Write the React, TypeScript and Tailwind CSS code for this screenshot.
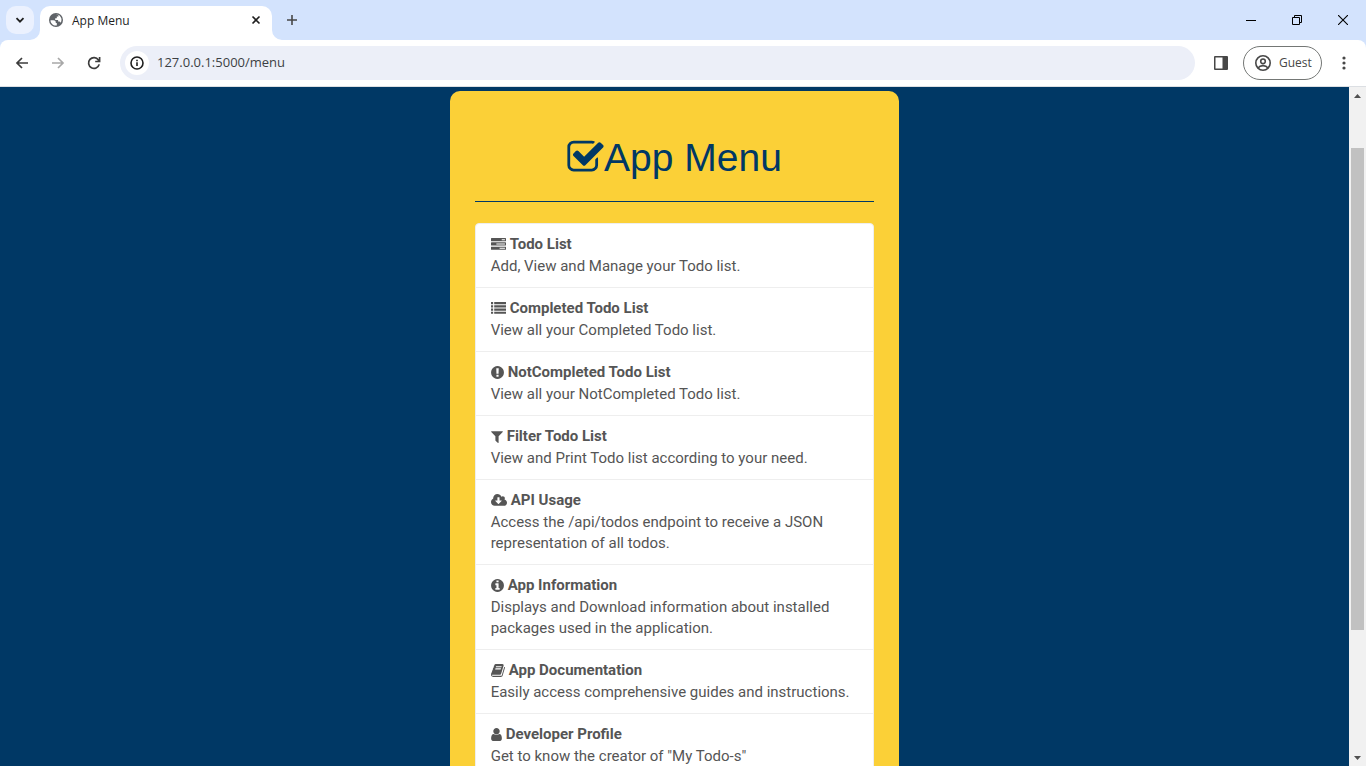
import type { ReactNode } from "react";

type IconProps = { d: string; width?: number; className: string };

function Glyph({ d, width = 1792, className }: IconProps) {
  const offset = width > 1792 ? 0 : (1792 - width) / 2;
  return (
    <svg viewBox={`${offset} 0 ${width} 1792`} className={className} fill="currentColor" aria-hidden="true">
      <path d={d} />
    </svg>
  );
}

const CHECK =
  "M1472 930v318q0 119-84.5 203.5t-203.5 84.5h-832q-119 0-203.5-84.5t-84.5-203.5v-832q0-119 84.5-203.5t203.5-84.5h832q63 0 117 25 15 7 18 23 3 17-9 29l-49 49q-10 10-23 10-3 0-9-2-23-6-45-6h-832q-66 0-113 47t-47 113v832q0 66 47 113t113 47h832q66 0 113-47t47-113v-254q0-13 9-22l64-64q10-10 23-10 6 0 12 3 20 8 20 29zm231-489l-814 814q-24 24-57 24t-57-24l-430-430q-24-24-24-57t24-57l110-110q24-24 57-24t57 24l263 263 647-647q24-24 57-24t57 24l110 110q24 24 24 57t-24 57z";
const TASKS =
  "M1024 1408h640v-128h-640v128zm-384-512h1024v-128h-1024v128zm640-512h384v-128h-384v128zm512 832v256q0 26-19 45t-45 19h-1664q-26 0-45-19t-19-45v-256q0-26 19-45t45-19h1664q26 0 45 19t19 45zm0-512v256q0 26-19 45t-45 19h-1664q-26 0-45-19t-19-45v-256q0-26 19-45t45-19h1664q26 0 45 19t19 45zm0-512v256q0 26-19 45t-45 19h-1664q-26 0-45-19t-19-45v-256q0-26 19-45t45-19h1664q26 0 45 19t19 45z";
const LIST =
  "M0 1280h256v256h-256zM0 896h256v256h-256zM0 512h256v256h-256zM0 128h256v256h-256zM384 1280h1408v256h-1408zM384 896h1408v256h-1408zM384 512h1408v256h-1408zM384 128h1408v256h-1408z";
const EXCLAMATION =
  "M896 128q209 0 385.5 103t279.5 279.5 103 385.5-103 385.5-279.5 279.5-385.5 103-385.5-103-279.5-279.5-103-385.5 103-385.5 279.5-279.5 385.5-103zm128 1247v-190q0-14-9-23.5t-22-9.5h-192q-13 0-23 10t-10 23v190q0 13 10 23t23 10h192q13 0 22-9.5t9-23.5zm-2-344l18-621q0-12-10-18-10-8-24-8h-220q-14 0-24 8-10 6-10 18l17 621q0 10 10 17.5t24 7.5h185q14 0 23.5-7.5t10.5-17.5z";
const FILTER =
  "M1595 295q17 41-14 70l-493 493v742q0 42-39 59-13 5-25 5-27 0-45-19l-256-256q-19-19-19-45v-486l-493-493q-31-29-14-70 17-39 59-39h1280q42 0 59 39z";
const CLOUD =
  "M1280 928q0-14-9-23t-23-9h-224v-352q0-13-9.500-22.500t-22.500-9.500h-192q-13 0-22.500 9.500t-9.500 22.500v352h-224q-13 0-22.500 9.500t-9.500 22.500q0 14 9 23l352 352q9 9 23 9t23-9l351-351q10-12 10-24zm640 224q0 159-112.500 271.500t-271.500 112.500h-1088q-185 0-316.500-131.500t-131.500-316.500q0-130 70-240t188-165q-2-30-2-43 0-212 150-362t362-150q156 0 285.500 87t188.500 231q71-62 166-62 106 0 181 75t75 181q0 76-41 138 130 31 213.500 135.500t83.500 238.500z";
const INFO =
  "M1152 1376v-160q0-14-9-23t-23-9h-96v-512q0-14-9-23t-23-9h-320q-14 0-23 9t-9 23v160q0 14 9 23t23 9h96v320h-96q-14 0-23 9t-9 23v160q0 14 9 23t23 9h448q14 0 23-9t9-23zm-128-896v-160q0-14-9-23t-23-9h-192q-14 0-23 9t-9 23v160q0 14 9 23t23 9h192q14 0 23-9t9-23zm640 416q0 209-103 385.5t-279.5 279.5-385.5 103-385.5-103-279.5-279.5-103-385.5 103-385.5 279.5-279.5 385.5-103 385.5 103 279.5 279.5 103 385.5z";
const BOOK =
  "M1703 478q40 57 18 129l-275 906q-19 64-76.500 107.500t-122.500 43.500h-923q-77 0-148.500-53.500t-99.500-131.500q-24-67-2-127 0-4 3-27t4-37q1-8-3-21.500t-3-19.500q2-11 8-21t16.500-23.500 16.500-23.500q23-38 45-91.500t30-91.500q3-10 .5-30t-.5-28q3-11 17-28t17-23q21-36 42-92t25-90q1-9-2.500-32t.5-28q4-13 22-30.500t22-22.500q19-26 42.500-84.500t27.500-96.500q1-8-3-25.500t-2-26.500q2-8 9-18t18-23 17-21q8-12 16.500-30.500t15-35 16-36 19.500-32 26.500-23.500 36-11.500 47.500 5.500l-1 3q38-9 51-9h761q74 0 114 56t18 130l-274 906q-36 119-71.500 153.500t-128.500 34.500h-869q-27 0-38 15-11 16-1 43 24 70 144 70h923q29 0 56-15.500t35-41.500l300-987q7-22 5-57 38 15 59 43zm-1064 2q-4 13 2 22.500t20 9.500h608q13 0 25.500-9.500t16.500-22.500l21-64q4-13-2-22.500t-20-9.500h-608q-13 0-25.500 9.500t-16.500 22.500zm-83 256q-4 13 2 22.500t20 9.500h608q13 0 25.500-9.500t16.500-22.500l21-64q4-13-2-22.500t-20-9.500h-608q-13 0-25.500 9.500t-16.500 22.500z";
const USER =
  "M1536 1399q0 109-62.500 187t-150.500 78h-854q-88 0-150.500-78t-62.500-187q0-85 8.500-160.500t31.500-152 58.500-131 94-89 134.500-34.500q131 128 313 128t313-128q76 0 134.500 34.500t94 89 58.500 131 31.500 152 8.500 160.500zm-256-887q0 159-112.500 271.500t-271.500 112.500-271.500-112.500-112.500-271.500 112.500-271.500 271.500-112.500 271.500 112.500 112.500 271.500z";

const items = [
  { title: "Todo List", text: "Add, View and Manage your Todo list.", d: TASKS, width: 1792, size: "w-[15px]" },
  { title: "Completed Todo List", text: "View all your Completed Todo list.", d: LIST, width: 1792, size: "w-[15px]" },
  { title: "NotCompleted Todo List", text: "View all your NotCompleted Todo list.", d: EXCLAMATION, width: 1536, size: "w-[13px]" },
  { title: "Filter Todo List", text: "View and Print Todo list according to your need.", d: FILTER, width: 1408, size: "w-[12px]" },
  { title: "API Usage", text: "Access the /api/todos endpoint to receive a JSON representation of all todos.", d: CLOUD, width: 1920, size: "w-[16px]" },
  { title: "App Information", text: "Displays and Download information about installed packages used in the application.", d: INFO, width: 1536, size: "w-[13px]" },
  { title: "App Documentation", text: "Easily access comprehensive guides and instructions.", d: BOOK, width: 1664, size: "w-[14px]" },
  { title: "Developer Profile", text: 'Get to know the creator of "My Todo-s"', d: USER, width: 1280, size: "w-[11px]" },
];

function IconButton({ label, className = "", children }: { label: string; className?: string; children: ReactNode }) {
  return (
    <button type="button" aria-label={label} className={`flex shrink-0 items-center justify-center ${className}`}>
      {children}
    </button>
  );
}

function TabStrip() {
  return (
    <div className="flex h-10 shrink-0 items-start bg-[#d3e3fd]">
      <IconButton label="Search tabs" className="mt-[6px] ml-[6px] size-7 rounded-[10px] bg-[#ebf1fe]">
        <svg width="10" height="10" viewBox="0 0 10 10" fill="none" stroke="#1f1f1f" strokeWidth="1.8" aria-hidden="true">
          <path d="M1.500 3.200 5 6.700 8.500 3.200" />
        </svg>
      </IconButton>
      <div className="relative mt-[6px] ml-[6px] flex h-[34px] w-[232px] items-center rounded-t-[10px] bg-white pr-[10px] pb-[6px] pl-2">
        <svg width="10" height="10" viewBox="0 0 10 10" fill="#fff" className="absolute bottom-0 -left-[10px]" aria-hidden="true">
          <path d="M10 0v10H0A10 10 0 0 0 10 0Z" />
        </svg>
        <svg width="10" height="10" viewBox="0 0 10 10" fill="#fff" className="absolute -right-[10px] bottom-0" aria-hidden="true">
          <path d="M0 0v10H10A10 10 0 0 1 0 0Z" />
        </svg>
        <svg width="16" height="16" viewBox="0 0 16 16" aria-hidden="true">
          <circle cx="8" cy="8" r="7" fill="#5f6368" />
          <path
            d="M2.500 8.300h2.800c1.600 0 2.500.8 2.500 2.200v.6h1v2.400c-3.200.6-6.200-1.700-6.300-5.200ZM8.200 2.500c2.700 0 4.500 1.600 5.200 4.100.3 1.800-.1 3.300-.8 4.200-.3-.7-.7-1.300-1.600-1.300h-.9V7.900H7.200V6.200h1.600V4.600h1.700V3.400c-1-.6-1.700-.7-2.300-.9Z"
            fill="#fff"
          />
        </svg>
        <span className="ml-2 flex-1 pt-[2px] text-xs text-[#1f1f1f]">App Menu</span>
        <IconButton label="Close tab" className="size-3">
          <svg width="10" height="10" viewBox="0 0 10 10" stroke="#1f1f1f" strokeWidth="1.600" aria-hidden="true">
            <path d="m1.500 1.500 7 7m0-7-7 7" />
          </svg>
        </IconButton>
      </div>
      <IconButton label="New tab" className="mt-[6px] ml-[6px] size-7">
        <svg width="12" height="12" viewBox="0 0 12 12" stroke="#474747" strokeWidth="1.600" aria-hidden="true">
          <path d="M6 1v10M1 6h10" />
        </svg>
      </IconButton>
      <div className="ml-auto flex h-10">
        <IconButton label="Minimize" className="w-[46px]">
          <svg width="10" height="10" viewBox="0 0 10 10" stroke="#000" aria-hidden="true">
            <path d="M0 5.500h10" />
          </svg>
        </IconButton>
        <IconButton label="Restore" className="w-[46px]">
          <svg width="10" height="10" viewBox="0 0 10 10" fill="none" stroke="#000" aria-hidden="true">
            <path d="M.5 2.500h7v7h-7zM2.500 2.500v-2h7v7h-2" />
          </svg>
        </IconButton>
        <IconButton label="Close" className="w-[46px]">
          <svg width="10" height="10" viewBox="0 0 10 10" stroke="#000" strokeWidth="1.100" aria-hidden="true">
            <path d="m0 0 10 10M10 0 0 10" />
          </svg>
        </IconButton>
      </div>
    </div>
  );
}

function Toolbar() {
  return (
    <div className="shrink-0 bg-[#d3e3fd]">
      <div className="flex h-[47px] items-center rounded-t-[8px] border-b border-[#dcdfe3] bg-white pr-[6px] pl-1">
        <IconButton label="Back" className="size-9">
          <svg width="14" height="14" viewBox="0 0 14 14" fill="none" stroke="#3c3c3c" strokeWidth="1.700" aria-hidden="true">
            <path d="M13 7H2.500M7 2 2 7l5 5" />
          </svg>
        </IconButton>
        <IconButton label="Forward" className="size-9">
          <svg width="14" height="14" viewBox="0 0 14 14" fill="none" stroke="#a8a8a8" strokeWidth="1.700" aria-hidden="true">
            <path d="M1 7h10.500M7 2l5 5-5 5" />
          </svg>
        </IconButton>
        <IconButton label="Reload" className="size-9">
          <svg width="14" height="14" viewBox="0 0 14 14" fill="none" stroke="#3c3c3c" strokeWidth="1.700" aria-hidden="true">
            <path d="M12.200 8.400A5.400 5.400 0 1 1 11.400 3.900L12.600 5.200M12.600 1v4.500H8.200" />
          </svg>
        </IconButton>
        <div className="ml-2 flex h-[34px] flex-1 items-center rounded-full bg-[#eceff8] pl-[5px]">
          <IconButton label="View site information" className="size-6 rounded-full bg-white">
            <svg width="14" height="14" viewBox="0 0 14 14" fill="none" stroke="#1f1f1f" strokeWidth="1.600" aria-hidden="true">
              <circle cx="7" cy="7" r="6" />
              <path d="M7 6.200V10M7 3.700v1.500" />
            </svg>
          </IconButton>
          <input
            type="text"
            aria-label="Address"
            defaultValue="127.0.0.1:5000/menu"
            className="ml-2 min-w-0 flex-1 bg-transparent text-[13px] text-[#3c3f44] outline-none"
          />
        </div>
        <IconButton label="Side panel" className="ml-2 size-9">
          <svg width="16" height="16" viewBox="0 0 16 16" aria-hidden="true">
            <path d="M2 1h12a1 1 0 0 1 1 1v12a1 1 0 0 1-1 1H2a1 1 0 0 1-1-1V2a1 1 0 0 1 1-1Zm.5 1.500v11h7v-11Z" fill="#474747" fillRule="evenodd" />
          </svg>
        </IconButton>
        <button type="button" className="ml-1 flex h-[34px] w-[79px] items-center rounded-full border border-[#747775] pl-[11px] text-xs text-[#474747]">
          <svg width="16" height="16" viewBox="0 0 16 16" fill="none" stroke="#474747" strokeWidth="1.600" className="mr-2" aria-hidden="true">
            <circle cx="8" cy="8" r="7.200" />
            <circle cx="8" cy="6.300" r="2.300" />
            <path d="M3 13c1.200-1.700 3-2.400 5-2.400s3.800.7 5 2.400" />
          </svg>
          Guest
        </button>
        <IconButton label="Menu" className="ml-[6px] size-8">
          <svg width="4" height="16" viewBox="0 0 4 16" fill="#474747" aria-hidden="true">
            <circle cx="2" cy="3" r="1.600" />
            <circle cx="2" cy="8" r="1.600" />
            <circle cx="2" cy="13" r="1.600" />
          </svg>
        </IconButton>
      </div>
    </div>
  );
}

function Scrollbar() {
  return (
    <div className="flex w-[17px] shrink-0 flex-col items-center bg-[#f1f1f1]" aria-hidden="true">
      <div className="flex h-[17px] items-center">
        <svg width="7" height="4" viewBox="0 0 7 4" fill="#505050">
          <path d="M0 4 3.500 0 7 4Z" />
        </svg>
      </div>
      <div className="flex min-h-0 w-[13px] flex-1 flex-col">
        <div className="flex-[44]" />
        <div className="flex-[482] bg-[#c1c1c1]" />
        <div className="flex-[119]" />
      </div>
      <div className="flex h-[17px] items-center">
        <svg width="7" height="4" viewBox="0 0 7 4" fill="#505050">
          <path d="M0 0 3.500 4 7 0Z" />
        </svg>
      </div>
    </div>
  );
}

export default function App() {
  return (
    <div className="flex h-screen flex-col overflow-hidden font-['Open_Sans',sans-serif]">
      <TabStrip />
      <Toolbar />
      <div className="flex min-h-0 flex-1">
        <main className="min-w-0 flex-1 overflow-hidden bg-[#003865] pt-1 font-[Roboto,sans-serif]">
          <section className="mx-auto w-1/3 rounded-[10px] bg-[#fbd037] px-[25px] pt-[45px] pb-[25px]">
            <h1 className="flex items-center justify-center border-b border-[#003865] pb-[21px] font-['Liberation_Sans',sans-serif] text-[39px] leading-[44px] text-[#003865]">
              <Glyph d={CHECK} width={1664} className="mb-[2px] h-[39px] w-[37px]" />
              App Menu
            </h1>
            <nav className="mt-[21px] divide-y divide-[#eee] overflow-hidden rounded-[4px] border border-[#eee] bg-white text-[15px] text-[#555]">
              {items.map((item) => (
                <a key={item.title} href="#" className="block px-[15px] py-[10px]">
                  <strong className="mb-[2px] flex items-center gap-1 leading-[20px] font-bold">
                    <Glyph d={item.d} width={item.width} className={`h-[15px] ${item.size}`} />
                    {item.title}
                  </strong>
                  <p className="leading-[21px]">{item.text}</p>
                </a>
              ))}
            </nav>
          </section>
        </main>
        <Scrollbar />
      </div>
    </div>
  );
}
